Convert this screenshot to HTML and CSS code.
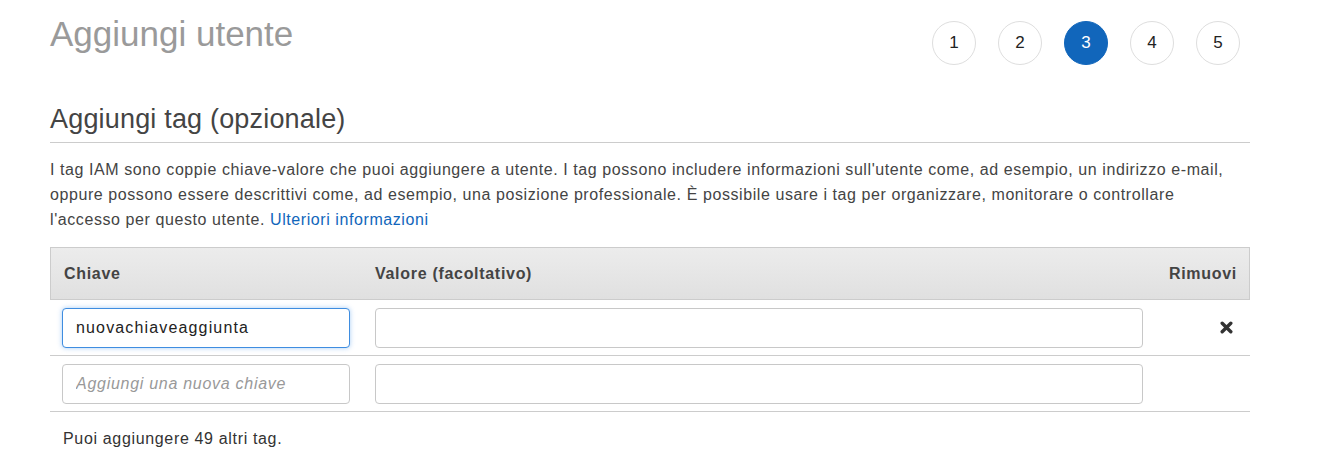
FILE: index.html
```html
<!DOCTYPE html>
<html lang="it">
<head>
<meta charset="utf-8">
<title>Aggiungi utente</title>
<link rel="stylesheet" href="styles.css">
</head>
<body>
<div class="page">
  <div class="top">
    <h1 class="title">Aggiungi utente</h1>
    <ol class="steps">
      <li class="step">1</li>
      <li class="step">2</li>
      <li class="step active">3</li>
      <li class="step">4</li>
      <li class="step">5</li>
    </ol>
  </div>

  <h2 class="section-title">Aggiungi tag (opzionale)</h2>
  <p class="intro">I tag IAM sono coppie chiave-valore che puoi aggiungere a utente. I tag possono includere informazioni sull'utente come, ad esempio, un indirizzo e-mail, oppure possono essere descrittivi come, ad esempio, una posizione professionale. È possibile usare i tag per organizzare, monitorare o controllare l'accesso per questo utente. <a class="link" href="#">Ulteriori informazioni</a></p>

  <div class="tags">
    <div class="tags-head">
      <div class="cell c-key">Chiave</div>
      <div class="cell c-val">Valore (facoltativo)</div>
      <div class="cell c-rm">Rimuovi</div>
    </div>
    <div class="tags-row">
      <div class="cell c-key"><input class="field focused" type="text" value="nuovachiaveaggiunta"></div>
      <div class="cell c-val"><input class="field" type="text" value=""></div>
      <div class="cell c-rm">
        <svg class="rm-icon" width="13" height="13" viewBox="0 0 13 13" aria-label="Rimuovi">
          <path d="M2.2 2.2 L10.8 10.8 M10.8 2.2 L2.2 10.8" stroke="#333" stroke-width="3.4" stroke-linecap="round"/>
        </svg>
      </div>
    </div>
    <div class="tags-row">
      <div class="cell c-key"><input class="field" type="text" placeholder="Aggiungi una nuova chiave"></div>
      <div class="cell c-val"><input class="field" type="text" value=""></div>
      <div class="cell c-rm"></div>
    </div>
  </div>

  <p class="remaining">Puoi aggiungere 49 altri tag.</p>
</div>
</body>
</html>
```

FILE: styles.css
```css
* { box-sizing: border-box; }

html, body {
  margin: 0;
  padding: 0;
  background: #fff;
}

body {
  font-family: "Liberation Sans", Arial, sans-serif;
  color: #444;
}

.page {
  width: 1250px;
  padding-left: 50px;
}

.top {
  display: flex;
  justify-content: space-between;
  align-items: flex-start;
}

.title {
  margin: 14px 0 0;
  font-size: 35px;
  line-height: 40px;
  font-weight: normal;
  color: #9a9a9a;
}

.steps {
  display: flex;
  gap: 22px;
  list-style: none;
  margin: 21px 10px 0 0;
  padding: 0;
}

.step {
  width: 44px;
  height: 44px;
  border: 1px solid #dedede;
  border-radius: 50%;
  display: flex;
  align-items: center;
  justify-content: center;
  font-size: 17px;
  color: #222;
  background: #fff;
}

.step.active {
  background: #1166bb;
  border-color: #1166bb;
  color: #fff;
}

.section-title {
  margin: 38px 0 0;
  font-size: 27px;
  line-height: 32px;
  letter-spacing: 0.18px;
  font-weight: normal;
  color: #444;
  padding-bottom: 7px;
  border-bottom: 1px solid #ccc;
}

.intro {
  margin: 14px 0 0;
  padding-right: 16px;
  font-size: 16px;
  line-height: 25px;
  letter-spacing: 0.58px;
  color: #444;
}

.link {
  color: #1166bb;
  text-decoration: none;
}

.tags {
  margin-top: 15px;
}

.tags-head,
.tags-row {
  display: grid;
  grid-template-columns: 312px 1fr 95px;
}

.tags-head {
  height: 53px;
  border: 1px solid #ccc;
  background: linear-gradient(#ececec, #e0e0e0);
  align-items: center;
  font-weight: bold;
  font-size: 16px;
  letter-spacing: 0.7px;
  color: #444;
}

.tags-head .c-key { padding-left: 13px; }
.tags-head .c-val { padding-left: 12px; }
.tags-head .c-rm { text-align: right; padding-right: 12px; }

.tags-row {
  height: 56px;
  border-bottom: 1px solid #ccc;
  align-items: center;
}

.tags-row .c-key { padding-left: 12px; padding-right: 12px; }
.tags-row .c-val { padding-left: 13px; padding-right: 12px; }
.tags-row .c-rm {
  display: flex;
  justify-content: flex-end;
  padding-right: 17px;
}

.field {
  display: block;
  width: 100%;
  height: 40px;
  padding: 0 13px;
  border: 1px solid #c8c8c8;
  border-radius: 4px;
  font-family: "Liberation Sans", Arial, sans-serif;
  font-size: 16px;
  letter-spacing: 1.15px;
  color: #222;
  background: #fff;
  outline: none;
}

.field::placeholder {
  color: #999;
  font-style: italic;
  letter-spacing: 0.72px;
}

.field.focused {
  border-color: #3f8de0;
  box-shadow: 0 0 5px rgba(40, 130, 230, 0.4);
}

.rm-icon { display: block; }

.remaining {
  margin: 14px 0 0 13px;
  font-size: 16px;
  line-height: 25px;
  letter-spacing: 0.66px;
  color: #333;
}
```
